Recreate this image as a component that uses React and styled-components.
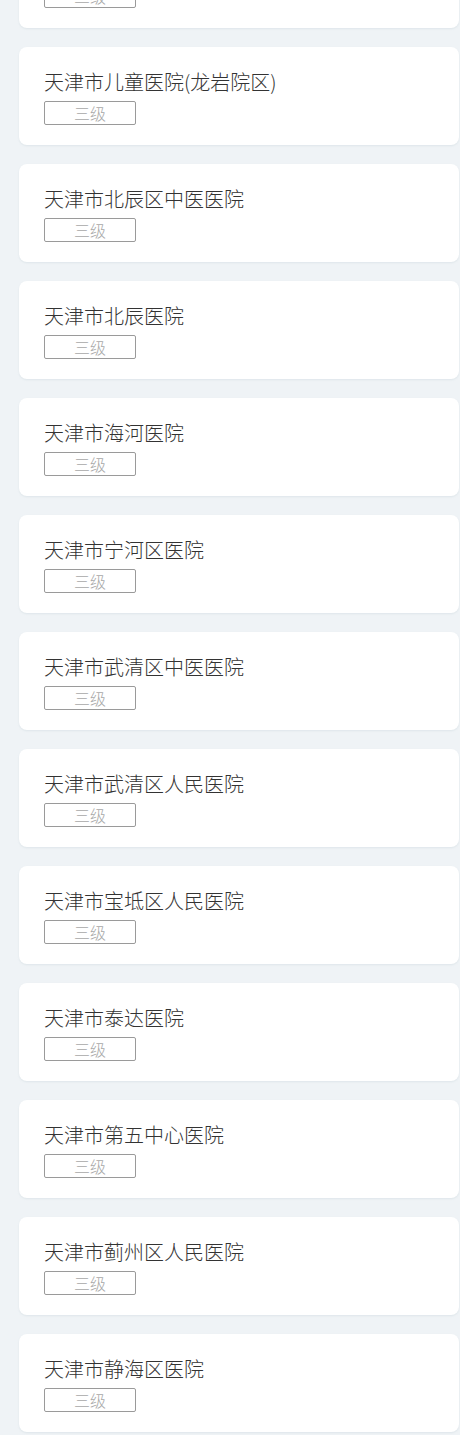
import React from "react";
import styled, { createGlobalStyle } from "styled-components";

const GlobalStyle = createGlobalStyle`
    html, body {
        margin: 0;
        padding: 0;
        background: #eff3f6;
        overflow: hidden;
    }
    body {
        font-family: "Noto Sans CJK SC", "Noto Sans", sans-serif;
    }
`;

// ===== STYLED COMPONENTS =====
const Page = styled.div`
    height: 1435px;
    overflow: hidden;
    background: #eff3f6;
`;

const List = styled.div`
    display: flex;
    flex-direction: column;
    gap: 19px;
    margin-top: -70px;
    padding-left: 19px;
    padding-right: 1px;
`;

const Card = styled.div`
    background: #ffffff;
    border-radius: 8px;
    height: 98px;
    box-sizing: border-box;
    padding: 24px 25px 0;
    box-shadow: 0 1px 2px rgba(150, 170, 185, 0.18);
`;

const Name = styled.div`
    font-size: 20px;
    line-height: 22px;
    font-weight: 300;
    color: #333333;
    white-space: nowrap;
`;

const Level = styled.div`
    margin-top: 8px;
    width: 92px;
    height: 24px;
    box-sizing: border-box;
    border: 1px solid #9a9a9a;
    border-radius: 2px;
    display: flex;
    align-items: center;
    justify-content: center;
    font-size: 16px;
    font-weight: 300;
    color: #a8a8a8;
`;

const hospitals = [
    "天津市第一中心医院",
    "天津市儿童医院(龙岩院区)",
    "天津市北辰区中医医院",
    "天津市北辰医院",
    "天津市海河医院",
    "天津市宁河区医院",
    "天津市武清区中医医院",
    "天津市武清区人民医院",
    "天津市宝坻区人民医院",
    "天津市泰达医院",
    "天津市第五中心医院",
    "天津市蓟州区人民医院",
    "天津市静海区医院",
];

// ===== MAIN COMPONENT =====
export default function App() {
    return (
        <Page>
            <GlobalStyle />
            <List>
                {hospitals.map((name, i) => (
                    <Card key={i}>
                        <Name>{name}</Name>
                        <Level>三级</Level>
                    </Card>
                ))}
            </List>
        </Page>
    );
}
